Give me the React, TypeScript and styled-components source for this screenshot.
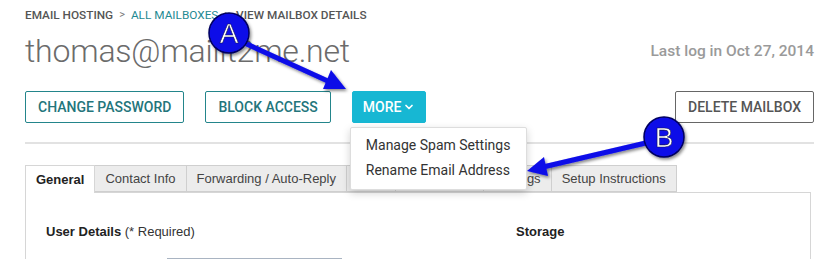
import React from "react";
import styled, { createGlobalStyle } from "styled-components";
import { ChevronDown } from "lucide-react";

const GlobalStyle = createGlobalStyle`
  html, body {
    margin: 0;
    padding: 0;
    background: #fff;
  }
  body {
    font-family: Roboto, "Liberation Sans", Arial, sans-serif;
    color: #333;
  }
`;

const Page = styled.div`
  position: relative;
  width: 820px;
  height: 259px;
  overflow: hidden;
  box-sizing: border-box;
  padding: 8px 6px 0 25px;
`;

const Header = styled.div`
  display: flex;
  justify-content: space-between;
  align-items: flex-end;
`;

const Crumbs = styled.div`
  display: flex;
  align-items: center;
  gap: 6px;
  font-size: 11.8px;
  line-height: 14px;
  font-weight: 500;
  color: #555;
  text-transform: uppercase;
`;

const Crumb = styled.span<{ $link?: boolean }>`
  color: ${(p) => (p.$link ? "#1f8a93" : "#555")};
  font-weight: ${(p) => (p.$link ? 400 : 500)};
`;

const Sep = styled.span`
  color: #777;
  font-weight: 400;
  font-size: 11px;
`;

const Title = styled.h1`
  margin: 10px 0 0;
  font-family: "Roboto Light", Roboto, "Liberation Sans", sans-serif;
  font-size: 32px;
  line-height: 38px;
  font-weight: 300;
  color: #6b6b6b;
  letter-spacing: -0.2px;
`;

const LastLog = styled.div`
  font-size: 15.5px;
  font-weight: 500;
  color: #9a9a9a;
  line-height: 38px;
`;

const Actions = styled.div`
  display: flex;
  align-items: center;
  gap: 21px;
  margin-top: 21px;
`;

const Button = styled.button<{ $tone?: "teal" | "gray" | "solid" }>`
  height: 32px;
  box-sizing: border-box;
  padding: 0 ${(p) => (p.$tone === "solid" ? "10px" : "12px")};
  border-radius: 2px;
  font-family: Roboto, "Liberation Sans", Arial, sans-serif;
  font-size: 14px;
  font-weight: 500;
  text-transform: uppercase;
  display: flex;
  align-items: center;
  gap: 2px;
  cursor: pointer;
  background: ${(p) => (p.$tone === "solid" ? "#17b7d3" : "#fff")};
  color: ${(p) =>
    p.$tone === "solid" ? "#fff" : p.$tone === "gray" ? "#555" : "#23757b"};
  border: 1px solid
    ${(p) =>
      p.$tone === "solid" ? "#17b7d3" : p.$tone === "gray" ? "#666" : "#23858b"};
`;

const MoreWrap = styled.div`
  position: relative;
`;

const Spacer = styled.div`
  flex: 1;
`;

const Menu = styled.ul`
  position: absolute;
  top: 36px;
  left: -2px;
  width: 177px;
  box-sizing: border-box;
  margin: 0;
  padding: 5px 0 6px;
  list-style: none;
  background: #fff;
  border: 1px solid #ddd;
  border-radius: 2px;
  box-shadow: 0 3px 8px rgba(0, 0, 0, 0.18);
  z-index: 5;
`;

const MenuItem = styled.li`
  padding: 0 15px;
  font-size: 14px;
  line-height: 25px;
  color: #333;
  white-space: nowrap;
`;

const Divider = styled.hr`
  margin: 19px 0 0;
  border: none;
  height: 2px;
  background: #e2e2e2;
`;

const Tabs = styled.div`
  display: flex;
  margin-top: 21px;
  position: relative;
  z-index: 1;
`;

const Tab = styled.div<{ $active?: boolean }>`
  box-sizing: border-box;
  height: ${(p) => (p.$active ? "28px" : "27px")};
  padding: 0 10px;
  display: flex;
  align-items: center;
  font-family: "Liberation Sans", Arial, sans-serif;
  font-size: 13px;
  font-weight: ${(p) => (p.$active ? 700 : 400)};
  color: ${(p) => (p.$active ? "#222" : "#444")};
  background: ${(p) => (p.$active ? "#fff" : "#ececec")};
  border: 1px solid ${(p) => (p.$active ? "#d6d6d6" : "#cfcfcf")};
  border-bottom: ${(p) => (p.$active ? "none" : "1px solid #cfcfcf")};
  border-left: ${(p) => (p.$active ? "1px solid #d6d6d6" : "none")};
  white-space: nowrap;
`;

const Panel = styled.div`
  margin-top: -1px;
  margin-right: 3px;
  height: 120px;
  border: 1px solid #d6d6d6;
  padding: 31px 20px 0;
  display: grid;
  grid-template-columns: 470px 1fr;
  align-content: start;
  row-gap: 18px;
  font-family: "Liberation Sans", Arial, sans-serif;
  font-size: 13px;
  line-height: 16px;
  color: #222;
`;

const SectionTitle = styled.div`
  font-weight: 700;
  span {
    font-weight: 400;
    color: #333;
  }
`;

const FieldRow = styled.div`
  padding-left: 121px;
`;

const Input = styled.div`
  width: 175px;
  height: 26px;
  border: 1px solid #a9b4c2;
  box-sizing: border-box;
`;

const Overlay = styled.svg`
  position: absolute;
  inset: 0;
  pointer-events: none;
  z-index: 10;
`;

const Callout: React.FC<{ cx: number; cy: number; label: string; shaft: [number, number, number, number]; head: string }> = ({
  cx,
  cy,
  label,
  shaft,
  head,
}) => (
  <g filter="url(#shadow)">
    <line x1={shaft[0]} y1={shaft[1]} x2={shaft[2]} y2={shaft[3]} stroke="#0a0ae8" strokeWidth={5} />
    <polygon points={head} fill="#0a0ae8" />
    <circle cx={cx} cy={cy} r={20} fill="#0a0ae8" stroke="#050560" strokeWidth={1.5} />
    <text
      x={cx}
      y={cy + 10}
      textAnchor="middle"
      fontFamily="'Liberation Sans', Arial, sans-serif"
      fontSize={28}
      fill="#fff"
      stroke="#1a1a4a"
      strokeWidth={0.6}
    >
      {label}
    </text>
  </g>
);

const App: React.FC = () => {
  return (
    <>
      <GlobalStyle />
      <Page>
        <Header>
          <div>
            <Crumbs>
              <Crumb>Email Hosting</Crumb>
              <Sep>&gt;</Sep>
              <Crumb $link>All Mailboxes</Crumb>
              <Sep>&gt;</Sep>
              <Crumb>View Mailbox Details</Crumb>
            </Crumbs>
            <Title>thomas@mailit2me.net</Title>
          </div>
          <LastLog>Last log in Oct 27, 2014</LastLog>
        </Header>

        <Actions>
          <Button $tone="teal">Change Password</Button>
          <Button $tone="teal">Block Access</Button>
          <MoreWrap>
            <Button $tone="solid">
              More <ChevronDown size={12} strokeWidth={3.5} />
            </Button>
            <Menu>
              <MenuItem>Manage Spam Settings</MenuItem>
              <MenuItem>Rename Email Address</MenuItem>
            </Menu>
          </MoreWrap>
          <Spacer />
          <Button $tone="gray">Delete Mailbox</Button>
        </Actions>

        <Divider />

        <Tabs>
          <Tab $active>General</Tab>
          <Tab>Contact Info</Tab>
          <Tab>Forwarding / Auto-Reply</Tab>
          <Tab>Alias</Tab>
          <Tab>Spam Filter</Tab>
          <Tab>Settings</Tab>
          <Tab>Setup Instructions</Tab>
        </Tabs>
        <Panel>
          <SectionTitle>
            User Details <span>(* Required)</span>
          </SectionTitle>
          <SectionTitle>Storage</SectionTitle>
          <FieldRow>
            <Input />
          </FieldRow>
        </Panel>

        <Overlay width={820} height={259} viewBox="0 0 820 259">
          <defs>
            <filter id="shadow" x="-20%" y="-20%" width="140%" height="140%">
              <feDropShadow dx={1.5} dy={2} stdDeviation={1.5} floodColor="#000" floodOpacity={0.45} />
            </filter>
          </defs>
          <Callout
            cx={229}
            cy={33}
            label="A"
            shaft={[238, 40, 330, 82]}
            head="346,89 323,89 331,70"
          />
          <Callout
            cx={664}
            cy={137}
            label="B"
            shaft={[650, 142, 543, 167]}
            head="527,171 548,176 544,157"
          />
        </Overlay>
      </Page>
    </>
  );
};

export default App;
